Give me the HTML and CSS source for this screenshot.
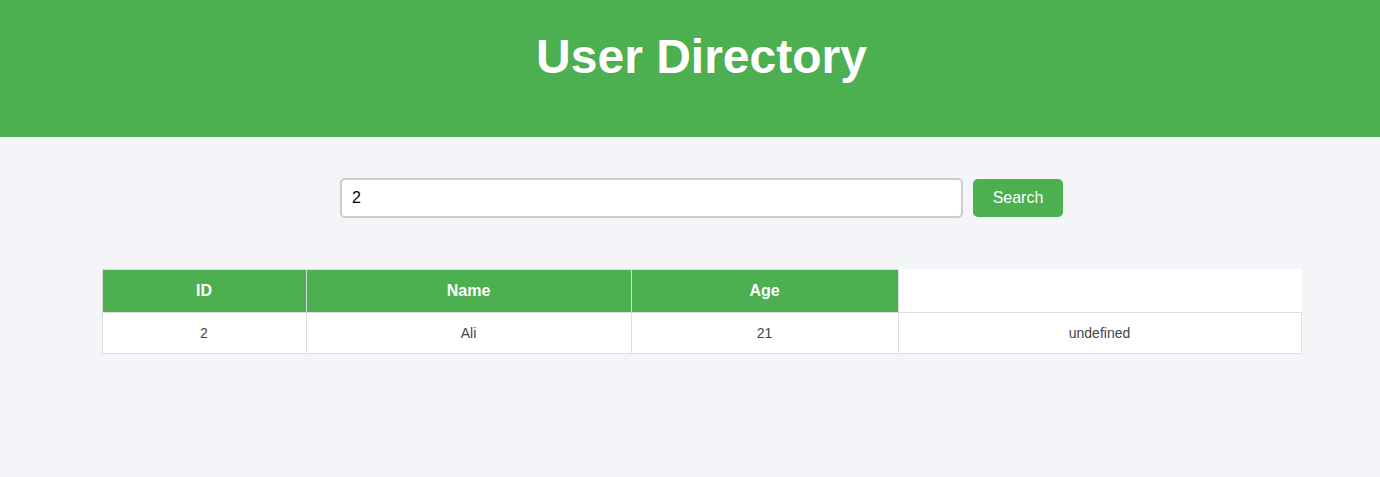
FILE: index.html
```html
<!DOCTYPE html>
<html lang="en">
<head>
<meta charset="utf-8">
<title>User Directory</title>
<link rel="stylesheet" href="styles.css">
</head>
<body>
<header class="site-header">
  <h1 class="title">User Directory</h1>
</header>
<main class="content">
  <form class="search">
    <input class="search-input" type="text" value="2">
    <button class="search-btn" type="button">Search</button>
  </form>
  <table class="users">
    <colgroup>
      <col class="col-id">
      <col class="col-name">
      <col class="col-age">
      <col class="col-extra">
    </colgroup>
    <thead>
      <tr><th>ID</th><th>Name</th><th>Age</th></tr>
    </thead>
    <tbody>
      <tr><td>2</td><td>Ali</td><td>21</td><td>undefined</td></tr>
    </tbody>
  </table>
</main>
</body>
</html>
```
FILE: styles.css
```css
* { box-sizing: border-box; }
body {
  margin: 0;
  background: #f4f5f9;
  font-family: "Liberation Sans", Arial, sans-serif;
  color: #444;
}
.site-header {
  background: #4caf50;
  color: #fff;
  text-align: center;
  padding: 29px 0 53px 23px;
}
.title {
  margin: 0;
  font-size: 48px;
  line-height: 55px;
  font-weight: bold;
}
.content {
  padding-left: 23px;
}
.search {
  display: flex;
  justify-content: center;
  align-items: center;
  gap: 10px;
  margin: 41px 0 0;
}
.search-input {
  width: 623px;
  height: 40px;
  padding: 0 10px;
  border: 2px solid #cccccc;
  border-radius: 5px;
  background: #fff;
  font-family: "Liberation Sans", Arial, sans-serif;
  font-size: 16px;
  color: #000;
  outline: none;
}
.search-btn {
  width: 90px;
  height: 38px;
  border: 0;
  border-radius: 5px;
  background: #4caf50;
  color: #fff;
  font-family: "Liberation Sans", Arial, sans-serif;
  font-size: 16px;
  padding: 0;
}
.users {
  width: 1200px;
  margin: 51px auto 0;
  border-collapse: collapse;
  table-layout: fixed;
  background: #fff;
}
.col-id { width: 204px; }
.col-name { width: 325px; }
.col-age { width: 267px; }
.users th {
  background: #4caf50;
  color: #fff;
  font-size: 16px;
  font-weight: bold;
  padding: 12px;
  line-height: 18px;
  border: 1px solid #dddddd;
  text-align: center;
}
.users td {
  font-size: 14px;
  line-height: 16px;
  padding: 12px;
  border: 1px solid #dddddd;
  text-align: center;
  color: #444;
}
```
